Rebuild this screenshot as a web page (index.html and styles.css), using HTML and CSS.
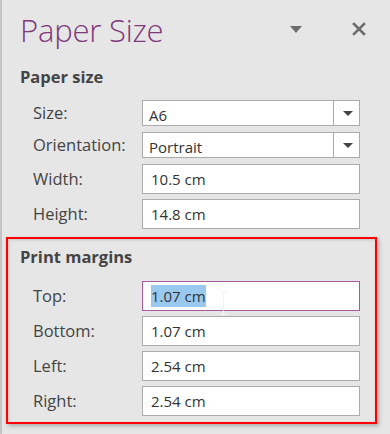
FILE: index.html
```html
<!DOCTYPE html>
<html lang="en">
<head>
  <meta charset="UTF-8">
  <title>Paper Size</title>
  <link rel="stylesheet" href="styles.css">
</head>
<body>
  <div class="pane">
    <div class="pane-header">
      <h1>Paper Size</h1>
      <span class="menu-arrow"></span>
      <svg class="close" width="14" height="14" viewBox="0 0 14 14">
        <path d="M2 2 L12 12 M12 2 L2 12" stroke="#6d6d6d" stroke-width="2.6" stroke-linecap="square"/>
      </svg>
    </div>

    <section class="group">
      <h2>Paper size</h2>
      <div class="row short">
        <label>Size:</label>
        <div class="field select"><span class="value">A6</span><span class="drop"><i></i></span></div>
      </div>
      <div class="row short">
        <label>Orientation:</label>
        <div class="field select"><span class="value">Portrait</span><span class="drop"><i></i></span></div>
      </div>
      <div class="row">
        <label>Width:</label>
        <div class="field"><span class="value">10.5 cm</span></div>
      </div>
      <div class="row">
        <label>Height:</label>
        <div class="field"><span class="value">14.8 cm</span></div>
      </div>
    </section>

    <section class="group margins">
      <h2>Print margins</h2>
      <div class="row">
        <label>Top:</label>
        <div class="field active"><span class="value"><span class="selected">1.07 cm</span></span><span class="ibeam"></span></div>
      </div>
      <div class="row">
        <label>Bottom:</label>
        <div class="field"><span class="value">1.07 cm</span></div>
      </div>
      <div class="row">
        <label>Left:</label>
        <div class="field"><span class="value">2.54 cm</span></div>
      </div>
      <div class="row">
        <label>Right:</label>
        <div class="field"><span class="value">2.54 cm</span></div>
      </div>
    </section>
  </div>
</body>
</html>
```

FILE: styles.css
```css
body {
  margin: 0;
  background: #e6e6e6;
  font-family: "Open Sans", "Noto Sans", sans-serif;
  color: #444;
}

.pane {
  min-height: 434px;
  box-sizing: border-box;
  border-left: 2px solid #c4c4c4;
  padding-right: 12px;
}

.pane-header {
  display: flex;
  align-items: center;
  height: 62px;
  padding-left: 18px;
}

.pane-header h1 {
  flex: 1;
  margin: 0;
  font-weight: 300;
  font-size: 31px;
  color: #80397b;
  letter-spacing: -0.2px;
  position: relative;
  top: -1px;
}

.menu-arrow {
  width: 0;
  height: 0;
  border-left: 6px solid transparent;
  border-right: 6px solid transparent;
  border-top: 7px solid #6d6d6d;
  margin-right: 50px;
  margin-top: -4px;
}

.close {
  margin-right: 12px;
  margin-top: -4px;
}

.group {
  padding: 0 16px 0 18px;
}

.group h2 {
  margin: 0 0 8px;
  font-size: 16.5px;
  font-weight: 700;
  color: #444;
  line-height: 24px;
  padding-top: 3px;
}

.row {
  display: flex;
  align-items: center;
  height: 35px;
}

.row.short {
  height: 32px;
  align-items: flex-start;
  padding-top: 3px;
  box-sizing: border-box;
}

.row.short label {
  line-height: 26px;
}

.row label {
  width: 109px;
  padding-left: 13px;
  font-size: 16.5px;
  color: #444;
}

.field {
  position: relative;
  display: flex;
  width: 218px;
  height: 30px;
  box-sizing: border-box;
  background: #fff;
  border: 1px solid #ababab;
  font-size: 15px;
  color: #333;
}

.row.short .field {
  height: 26px;
}

.field .value {
  flex: 1;
  padding: 5px 0 0 8px;
  line-height: 18px;
}

.row.short .field .value {
  padding: 5px 0 0 6px;
}

.field.select .drop {
  width: 25px;
  border-left: 1px solid #ababab;
  display: flex;
  align-items: center;
  justify-content: center;
}

.drop i {
  width: 0;
  height: 0;
  border-left: 5px solid transparent;
  border-right: 5px solid transparent;
  border-top: 5px solid #444;
  margin-left: 2px;
}

.field.active {
  border-color: #a45aa4;
}

.selected {
  background: #99c9ef;
  padding: 1px 0 1px;
}

.ibeam {
  position: absolute;
  left: 80px;
  top: 9px;
  width: 1px;
  height: 24px;
  background: #f4f4f4;
}

.ibeam::before,
.ibeam::after {
  content: "";
  position: absolute;
  left: -3px;
  width: 7px;
  height: 1px;
  background: #f4f4f4;
}

.ibeam::before {
  top: 0;
}

.ibeam::after {
  bottom: 0;
}

.margins {
  margin: 6px 0 0 4px;
  padding: 3px 15px 4px 12px;
  width: 340px;
  border: 2px solid #f00;
  box-shadow: 2px 2px 4px rgba(0, 0, 0, 0.25), inset 1px 1px 3px rgba(0, 0, 0, 0.15);
}

.margins h2 {
  margin-bottom: 9px;
}
```
